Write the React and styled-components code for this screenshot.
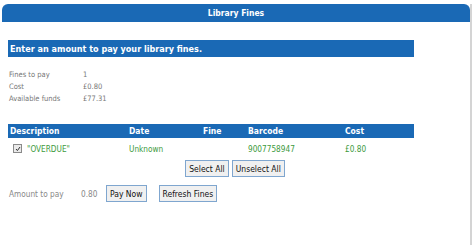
import React from "react";
import styled, { createGlobalStyle } from "styled-components";

const GlobalStyle = createGlobalStyle`
  html, body {
    margin: 0;
    padding: 0;
    background: #ffffff;
  }
  body {
    font-family: "DejaVu Sans Condensed", "DejaVu Sans", sans-serif;
  }
`;

const Panel = styled.div`
  margin: 4px 0 0 2px;
  width: 470px;
  height: 241px;
  box-sizing: border-box;
  border-right: 2px solid #d4d4d4;
  background: #fff;
`;

const PanelHeader = styled.div`
  height: 18px;
  background: #1a69b5;
  border-radius: 6px 6px 0 0;
  color: #fff;
  font-weight: bold;
  font-size: 8.5px;
  display: flex;
  align-items: center;
  justify-content: center;
`;

const Body = styled.div`
  padding: 18px 0 0 6px;
  width: 406px;
`;

const Banner = styled.div`
  height: 17px;
  background: #1a69b5;
  color: #fff;
  font-weight: bold;
  font-size: 9px;
  display: flex;
  align-items: center;
  padding-left: 2px;
`;

const InfoList = styled.div`
  margin-top: 12px;
  display: grid;
  grid-template-columns: 74px auto;
  row-gap: 1px;
  padding-left: 1px;
  font-size: 7.5px;
  color: #777;
  line-height: 11px;
`;

const Table = styled.div`
  margin-top: 20px;
`;

const cols = "119px 74px 45px 97px 1fr";

const HeadRow = styled.div`
  display: grid;
  grid-template-columns: ${cols};
  height: 14px;
  align-items: center;
  background: #1a69b5;
  color: #fff;
  font-weight: bold;
  font-size: 8.5px;
  padding-left: 2px;
`;

const DataRow = styled.div`
  display: grid;
  grid-template-columns: ${cols};
  height: 21px;
  align-items: center;
  color: #3d9a3d;
  font-size: 8.2px;
  padding-left: 2px;
`;

const DescCell = styled.div`
  display: flex;
  align-items: center;
  gap: 5px;
  padding-left: 3px;
`;

const Check = styled.span`
  width: 7px;
  height: 7px;
  border: 1px solid #8a8a8a;
  background: #eaeaea;
  display: flex;
  align-items: center;
  justify-content: center;
`;

const ButtonRow = styled.div`
  display: flex;
  justify-content: center;
  gap: 3px;
  margin-top: 1px;
  padding-left: 48px;
`;

const Button = styled.button`
  font-family: inherit;
  font-size: 8.5px;
  color: #111;
  background: #f0f0f0;
  border: 1px solid #7fa6cf;
  height: 17px;
  padding: 0 3px;
  margin: 0;
  cursor: pointer;
`;

const PayRow = styled.div`
  display: flex;
  align-items: center;
  margin-top: 8px;
  padding-left: 1px;
  font-size: 8.2px;
  color: #888;
`;

const PayLabel = styled.span`
  width: 72px;
`;

const PayValue = styled.span`
  width: 25px;
`;

const Spacer = styled.span`
  width: 12px;
`;

const App = () => {
  return (
    <>
      <GlobalStyle />
      <Panel>
        <PanelHeader>Library Fines</PanelHeader>
        <Body>
          <Banner>Enter an amount to pay your library fines.</Banner>
          <InfoList>
            <span>Fines to pay</span>
            <span>1</span>
            <span>Cost</span>
            <span>£0.80</span>
            <span>Available funds</span>
            <span>£77.31</span>
          </InfoList>
          <Table>
            <HeadRow>
              <span>Description</span>
              <span>Date</span>
              <span>Fine</span>
              <span>Barcode</span>
              <span>Cost</span>
            </HeadRow>
            <DataRow>
              <DescCell>
                <Check>
                  <svg width="6" height="6" viewBox="0 0 6 6">
                    <path d="M1 3 L2.4 4.6 L5 1" fill="none" stroke="#333" strokeWidth="1" />
                  </svg>
                </Check>
                <span>"OVERDUE"</span>
              </DescCell>
              <span>Unknown</span>
              <span></span>
              <span>9007758947</span>
              <span>£0.80</span>
            </DataRow>
            <ButtonRow>
              <Button>Select All</Button>
              <Button>Unselect All</Button>
            </ButtonRow>
          </Table>
          <PayRow>
            <PayLabel>Amount to pay</PayLabel>
            <PayValue>0.80</PayValue>
            <Button>Pay Now</Button>
            <Spacer />
            <Button>Refresh Fines</Button>
          </PayRow>
        </Body>
      </Panel>
    </>
  );
};

export default App;
